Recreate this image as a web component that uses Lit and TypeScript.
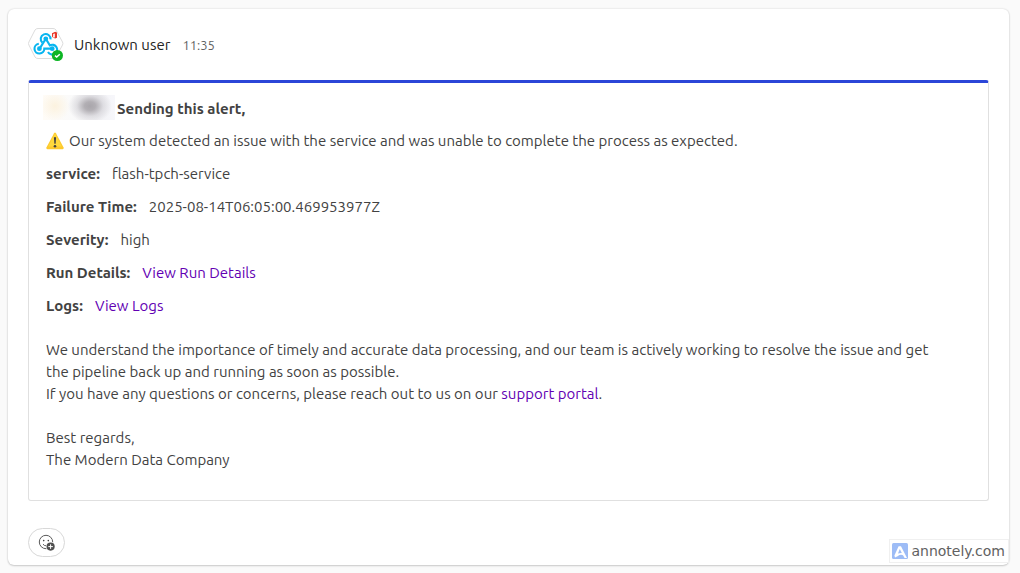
import { LitElement, html, css } from "lit";
import { customElement } from "lit/decorators.js";

const webhookAvatar = html`
  <svg class="avatar" viewBox="0 0 36 36" role="img" aria-label="Webhook, available">
    <path
      d="M10 1.5 H25 Q27 1.5 28 3 L34.5 15 Q35.3 16.5 34.5 18 L28 30 Q27 31.5 25 31.5 H10 Q8 31.5 7 30 L.9 18 Q.1 16.5 .9 15 L7 3 Q8 1.5 10 1.5Z"
      fill="#fff" stroke="#dcdcdc"
    ></path>
    <g fill="none" stroke="#08b5f0" stroke-width="2.1">
      <path d="M14.4 15.6 A4.9 4.9 0 1 1 22.5 12.4"></path>
      <path d="M17.8 11.7 L21.8 18.4 A4.9 4.9 0 1 1 20 25"></path>
      <path d="M10.8 16.8 A4.9 4.9 0 1 0 16.3 21.6 H24"></path>
      <path d="M17.5 12.2 L11.6 21.6"></path>
    </g>
    <g fill="#08b5f0">
      <circle cx="17.8" cy="11.8" r="2.4"></circle>
      <circle cx="11.4" cy="21.7" r="2.4"></circle>
      <circle cx="24.2" cy="21.7" r="2.4"></circle>
    </g>
    <path fill="#e8392b" fill-rule="evenodd" d="M24 6.2 L27.2 4.8 L29 5.4 V10.8 L27.2 11.4 L24 10.2 L26.8 10.4 V6.4 L25.2 6.9 V9.5 L24 10.2Z"></path>
    <circle cx="29.4" cy="28.5" r="5.6" fill="#0cb524"></circle>
    <path d="M27 28.6 L28.7 30 L31.8 27.2" fill="none" stroke="#fff" stroke-width="1.5"></path>
  </svg>`;

const warningIcon = html`
  <svg class="warning" viewBox="0 0 18 18" role="img" aria-label="Warning">
    <path d="M8.1 1.2 Q9 0 9.9 1.2 L17.6 15.6 Q18 17.3 16.6 17.3 H1.4 Q0 17.3 .4 15.6Z" fill="#fdc92e"></path>
    <path d="M8.4 2.3 Q9 1.4 9.6 2.3 L15.7 14.4 H2.3Z" fill="#ffd83c"></path>
    <path d="M7.9 5.4 Q9 4.6 10.1 5.4 L9.6 11.8 H8.4Z" fill="#424242"></path>
    <circle cx="9" cy="14.2" r="1.3" fill="#424242"></circle>
  </svg>`;

const reactionIcon = html`
  <svg class="smile" viewBox="0 0 18 18" aria-hidden="true">
    <circle cx="8" cy="8" r="6.7" fill="none" stroke="#5a5a5a" stroke-width="1"></circle>
    <circle cx="5.7" cy="6.6" r=".8" fill="#424242"></circle>
    <circle cx="10.3" cy="6.6" r=".8" fill="#424242"></circle>
    <path d="M5 10.2 Q6.4 12 8.5 11.8" fill="none" stroke="#5a5a5a" stroke-width="1"></path>
    <circle cx="12.6" cy="12.6" r="4.8" fill="#fff"></circle>
    <circle cx="12.6" cy="12.6" r="4.1" fill="#505050"></circle>
    <path d="M12.6 10.3 V14.9 M10.3 12.6 H14.9" stroke="#fff" stroke-width="1"></path>
  </svg>`;

const annotelyLogo = html`
  <svg class="logo" viewBox="0 0 16 16" aria-hidden="true">
    <rect width="16" height="16" rx="1.5" fill="#9dbcf6"></rect>
    <path
      d="M6.6 3.2 H9 L15 15 H12.6 L11 12.2 Q8.4 11 5.6 13.2 L3 14.6 L2.4 12.6Z M7.8 6 L6 10.6 Q8 9.8 9.8 10Z"
      fill="#fff" fill-rule="evenodd"
    ></path>
  </svg>`;

interface Field {
  label: string;
  value: string;
  link?: boolean;
}

const fields: Field[] = [
  { label: "service:", value: "flash-tpch-service" },
  { label: "Failure Time:", value: "2025-08-14T06:05:00.469953977Z" },
  { label: "Severity:", value: "high" },
  { label: "Run Details:", value: "View Run Details", link: true },
  { label: "Logs:", value: "View Logs", link: true },
];

@customElement("app-root")
export class AppRoot extends LitElement {
  static styles = css`
    :host {
      display: block;
      box-sizing: border-box;
      min-height: 100vh;
      padding: 9px 11px 8px 8px;
      background: #fafafa;
      color: #424242;
      font: 15px/22px Ubuntu, "Noto Sans", sans-serif;
    }
    .message {
      position: relative;
      padding: 18px 20px 8px;
      background: #fff;
      border-radius: 6px;
      box-shadow: 0 0 2px rgba(0, 0, 0, 0.16), 0 1px 2px rgba(0, 0, 0, 0.16);
    }
    .header {
      display: flex;
      align-items: center;
      height: 36px;
      margin-bottom: 17px;
    }
    .avatar {
      width: 36px;
      height: 36px;
      margin-right: 10px;
    }
    .name {
      color: #242424;
      margin-right: 12px;
    }
    .time {
      color: #616161;
      font-size: 13px;
    }
    .alert {
      padding: 15px 36px 29px 17px;
      border: 1px solid #e0e0e0;
      border-top: 3px solid #2b46d8;
      border-radius: 3px;
    }
    .title {
      display: flex;
      margin: 0 0 10px;
      font-size: 15px;
      font-weight: 700;
    }
    .redacted {
      width: 72px;
      height: 25px;
      margin: -3px 2px 0 -3px;
      background:
        radial-gradient(ellipse 22px 17px at 47px 11px, #a9a6ab 0, #b2afb4 25%, rgba(200, 198, 204, 0.5) 60%, rgba(230, 230, 235, 0) 100%),
        radial-gradient(ellipse 15px 15px at 12px 11px, #fcf2df 0, rgba(252, 242, 223, 0) 100%),
        linear-gradient(90deg, #fffcf7, #fafafa 40%, #f2f2f5 75%, #f7f7fb);
    }
    .summary {
      display: flex;
      align-items: center;
      gap: 5px;
      margin: 0 0 11px;
    }
    .warning {
      flex: none;
      width: 18px;
      height: 18px;
    }
    .fields {
      display: grid;
      gap: 11px;
      margin: 0 0 22px;
    }
    .field {
      display: flex;
      gap: 12px;
    }
    .label {
      font-weight: 700;
    }
    .value {
      margin: 0;
    }
    .text {
      margin: 0;
    }
    .signature {
      margin: 22px 0 0;
    }
    a {
      color: #6200b3;
      text-decoration: none;
    }
    .react {
      display: flex;
      align-items: center;
      justify-content: center;
      width: 37px;
      height: 29px;
      margin-top: 27px;
      padding: 0;
      background: #fff;
      border: 1px solid #d8d8d8;
      border-radius: 15px;
    }
    .smile {
      width: 18px;
      height: 18px;
    }
    .watermark {
      position: absolute;
      right: 0;
      bottom: 2px;
      display: flex;
      align-items: center;
      gap: 3px;
      padding: 0 3px 0 2px;
      border: 1px solid #f0f0f0;
      background: #fff;
      color: #616161;
      font: 14px/22px "DejaVu Sans", sans-serif;
    }
    .logo {
      width: 16px;
      height: 16px;
    }
  `;

  render() {
    return html`
      <article class="message">
        <header class="header">
          ${webhookAvatar}
          <span class="name">Unknown user</span>
          <time class="time">11:35</time>
        </header>
        <section class="alert">
          <h1 class="title"><span class="redacted"></span>Sending this alert,</h1>
          <p class="summary">
            ${warningIcon}
            <span>Our system detected an issue with the service and was unable to complete the process as expected.</span>
          </p>
          <dl class="fields">
            ${fields.map(
              (f) => html`<div class="field">
                <dt class="label">${f.label}</dt>
                <dd class="value">${f.link ? html`<a href="#">${f.value}</a>` : f.value}</dd>
              </div>`
            )}
          </dl>
          <p class="text">
            We understand the importance of timely and accurate data processing, and our team is actively working to
            resolve the issue and get the pipeline back up and running as soon as possible.
          </p>
          <p class="text">
            If you have any questions or concerns, please reach out to us on our <a href="#">support portal</a>.
          </p>
          <p class="signature">Best regards,<br />The Modern Data Company</p>
        </section>
        <button class="react" type="button" aria-label="Add reaction">${reactionIcon}</button>
        <a class="watermark" href="#">${annotelyLogo}<span>annotely.com</span></a>
      </article>
    `;
  }
}
